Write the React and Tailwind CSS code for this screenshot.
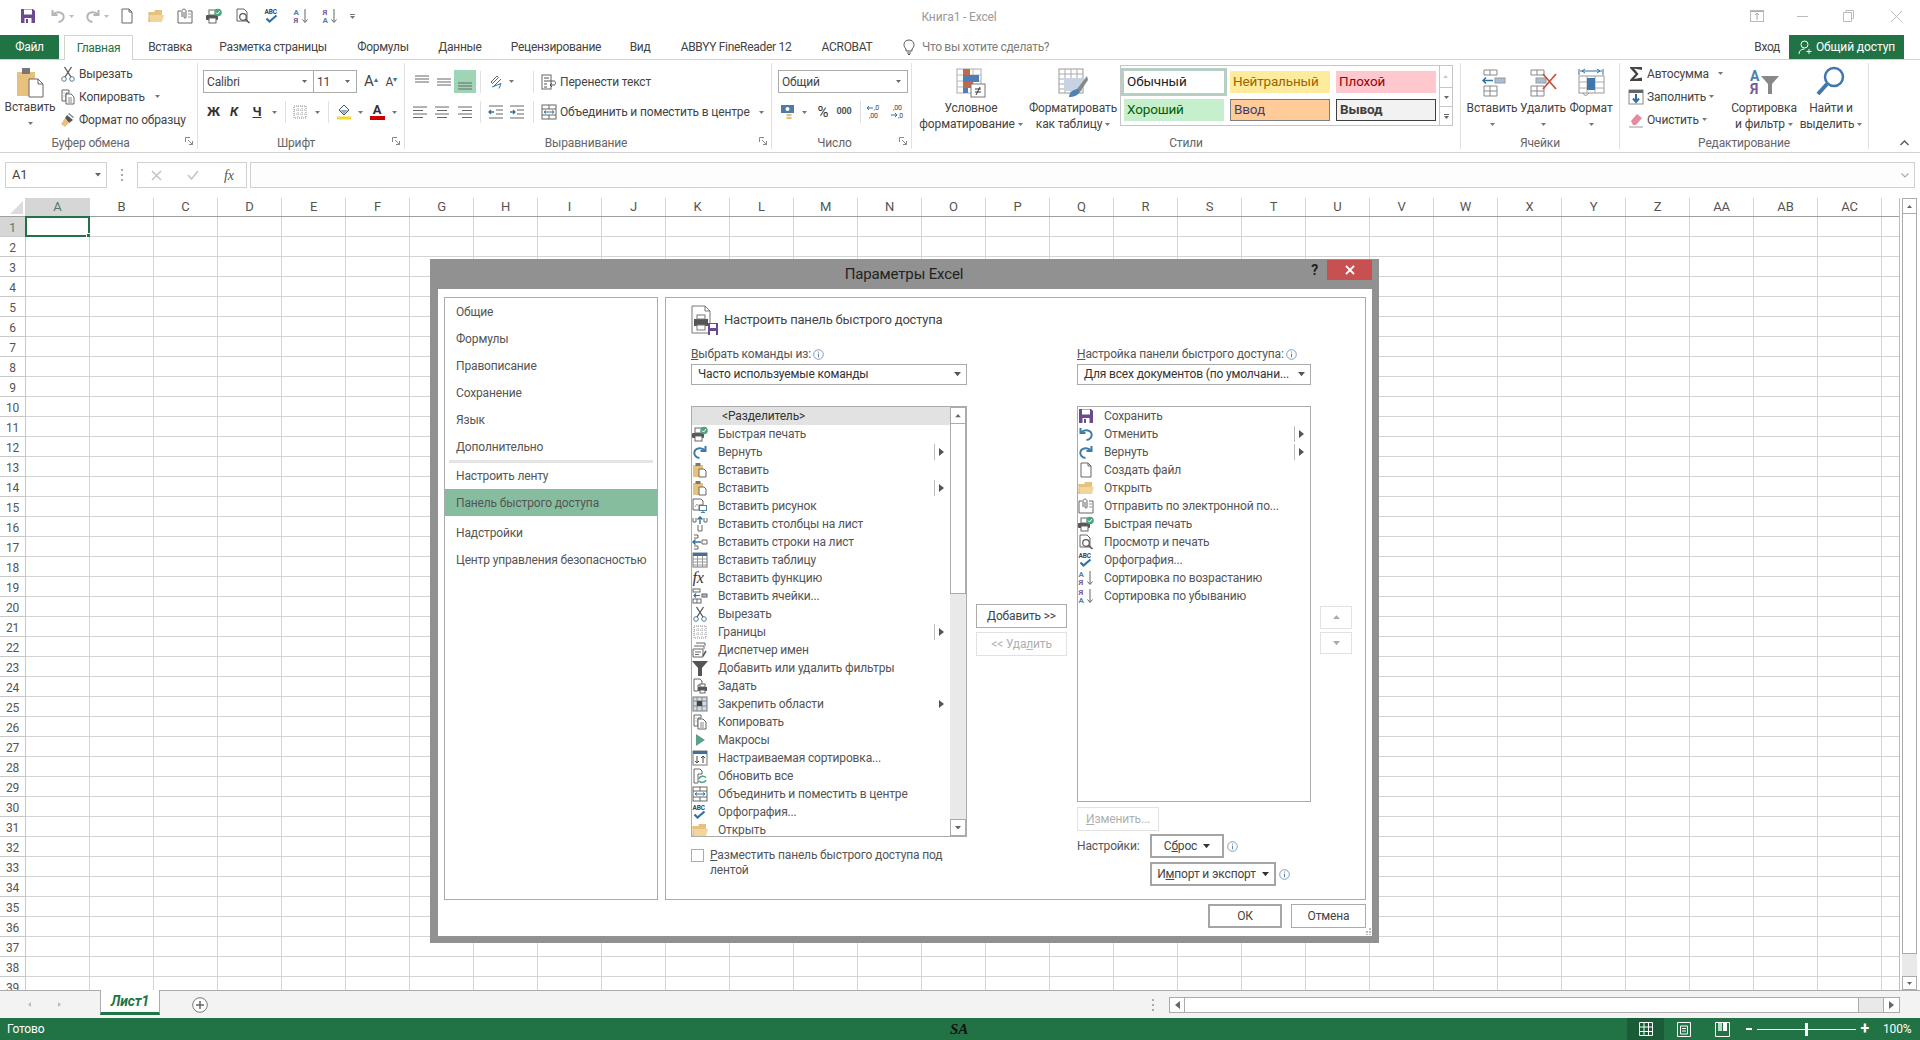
import React from 'react';

const Caret = ({ c = '#777', w = 5 }) => (
  <svg width={w} height={w * 0.6} viewBox="0 0 5 3" className="shrink-0"><path d="M0 0h5L2.5 3z" fill={c} /></svg>
);

const Arrow = () => (
  <svg width="5" height="8" viewBox="0 0 5 8"><path d="M0 0l5 4-5 4z" fill="#555" /></svg>
);

const Info = () => (
  <svg width="11" height="11" viewBox="0 0 11 11" className="shrink-0">
    <circle cx="5.5" cy="5.5" r="4.8" fill="#fff" stroke="#7f9fbf" />
    <path d="M5.5 2.6v1M5.5 4.7v3.6" stroke="#5f85a8" />
  </svg>
);

const Txt = ({ x, y, s = 7, c = '#444', b, children }) => (
  <text x={x} y={y} fontSize={s} fill={c} fontWeight={b ? 700 : 400} fontFamily="Roboto, sans-serif">{children}</text>
);

const lines = (rows) => rows.map(([a, b, y], i) => <path key={i} d={`M${a} ${y}H${b}`} stroke="#666" />);

const ICONS = {
  save: <><path d="M1 1h12l2 2v12H1z" fill="#6b4a90" /><rect x="4" y="1.5" width="8" height="5" fill="#fff" /><rect x="4.5" y="10" width="7" height="5" fill="#fff" /><rect x="6" y="11" width="2" height="4" fill="#6b4a90" /></>,
  undo: <><path d="M2.5 2v5h5" fill="none" stroke="currentColor" strokeWidth="2" /><path d="M3 6.5C6 3 12 3.5 13.5 7.5 14.5 11 12 13.5 8.5 14" fill="none" stroke="currentColor" strokeWidth="2" /></>,
  redo: <><path d="M13.5 2v5h-5" fill="none" stroke="currentColor" strokeWidth="2" /><path d="M13 6.5C10 3 4 3.5 2.5 7.5 1.5 11 4 13.5 7.5 14" fill="none" stroke="currentColor" strokeWidth="2" /></>,
  file: <><path d="M3 1h7l3 3v11H3z" fill="#fff" stroke="#666" /><path d="M10 1v3h3" fill="none" stroke="#666" /></>,
  open: <><path d="M1 4h5l1-2h7v5H1z" fill="#e6c27e" /><path d="M0 14l2-7h14l-2 7z" fill="#f1d59a" /><path d="M1 4v10" stroke="#d9b26a" /></>,
  mail: <><path d="M1 3h3M11 3h4v12H1V3" fill="none" stroke="#666" /><path d="M5 9V3c0-2.5 4-2.5 4 0v6c0 1.5-2 1.5-2 0V4" fill="none" stroke="#666" /><path d="M11 6h3M11 9h3" stroke="#999" /></>,
  qprint: <><rect x="0" y="7" width="12" height="5" rx="1" fill="#555" /><rect x="3" y="2" width="7" height="5" fill="#fff" stroke="#666" /><rect x="3" y="10" width="7" height="5" fill="#fff" stroke="#666" /><circle cx="12" cy="4.5" r="3.8" fill="#4aa67e" /><path d="M10 4.5l1.5 1.5 2.5-3" fill="none" stroke="#fff" /></>,
  preview: <><path d="M2 1h7l3 3v9H2z" fill="#fff" stroke="#666" /><circle cx="8" cy="9" r="3.3" fill="#fff" stroke="#555" strokeWidth="1.2" /><path d="M10.5 11.5L14.5 15" stroke="#555" strokeWidth="1.6" /></>,
  spell: <><Txt x="0.5" y="6" s={6.5} c="#444" b>ABC</Txt><path d="M2.5 10.5l3 3 7-6" fill="none" stroke="#33719f" strokeWidth="2.2" /></>,
  asc: <><Txt x="0.5" y="7" s={8} c="#4d82ad" b>А</Txt><Txt x="0.5" y="15" s={8} c="#7a5a9e" b>Я</Txt><path d="M12 1v13M9.5 11.5L12 14.5l2.5-3" fill="none" stroke="#666" /></>,
  desc: <><Txt x="0.5" y="7" s={8} c="#7a5a9e" b>Я</Txt><Txt x="0.5" y="15" s={8} c="#4d82ad" b>А</Txt><path d="M12 1v13M9.5 11.5L12 14.5l2.5-3" fill="none" stroke="#666" /></>,
  paste: <><rect x="1" y="3" width="10" height="12" fill="#e6c27e" /><rect x="3.5" y="1" width="5" height="3" fill="#777" /><path d="M7 7h5l2 2v6H7z" fill="#fff" stroke="#666" /></>,
  cut: <><circle cx="4" cy="13" r="2.3" fill="none" stroke="#4d7da6" /><circle cx="12" cy="13" r="2.3" fill="none" stroke="#4d7da6" /><path d="M5 11L11.5 1M11 11L4.5 1" stroke="#555" strokeWidth="1.3" /></>,
  copy: <><path d="M2 1h7v3H6v8H2z" fill="#fff" stroke="#666" /><path d="M6 5h5l3 3v7H6z" fill="#fff" stroke="#666" /><path d="M8 9h4M8 11h4M8 13h4M3.5 4h1M3.5 7h1" stroke="#888" /></>,
  painter: <><path d="M7 3l6 5-4 3-4-5z" fill="#555" /><path d="M9 1l5 4-1 1-5-4z" fill="#888" /><path d="M5 6l4 5-4 4-4-3z" fill="#e6c27e" /></>,
  picture: <><path d="M1 1h8l2 2v4H7v5H1z" fill="#fff" stroke="#666" /><path d="M3 9l2-3 1.5 2" fill="none" stroke="#8faabf" /><rect x="7.5" y="7.5" width="7" height="5" fill="#fff" stroke="#4d82ad" /><path d="M9 14.5h4M11 12.5v2" stroke="#4d82ad" /></>,
  insCol: <><path d="M1 2v4h3V2M12 2v4h3V2" fill="none" stroke="#666" /><path d="M6 9v6h4V9" fill="none" stroke="#666" /><path d="M8 8V1M5.5 3.5L8 1l2.5 2.5" fill="none" stroke="#33719f" strokeWidth="1.4" /></>,
  insRow: <><path d="M2 1h4v3H2M2 12h4v3H2" fill="none" stroke="#666" /><path d="M10 6h5v4h-5z" fill="#fff" stroke="#666" /><path d="M9 8H1M3.5 5.5L1 8l2.5 2.5" fill="none" stroke="#33719f" strokeWidth="1.4" /></>,
  table: <><rect x="1" y="1" width="14" height="14" fill="#fff" stroke="#777" /><rect x="1" y="1" width="14" height="3" fill="#3f6f9f" /><path d="M1 7h14M1 10h14M1 13h14M5.5 4v11M10.5 4v11" stroke="#999" /></>,
  fx: <text x="0.5" y="13" fontSize="16" fill="#333" fontStyle="italic" fontFamily="Liberation Serif, serif">fx</text>,
  insCell: <><rect x="1" y="1" width="7" height="3" fill="#fff" stroke="#666" /><rect x="1" y="11" width="8" height="4" fill="#fff" stroke="#666" /><path d="M5 11v4" stroke="#666" /><rect x="10" y="6" width="5" height="3" fill="#a7bfd6" stroke="#666" /><path d="M8 7.5H2M4 5.5l-2 2 2 2" fill="none" stroke="#33719f" strokeWidth="1.2" /></>,
  borders: <><rect x="2" y="2" width="12" height="12" fill="none" stroke="#888" strokeDasharray="1 1" /><path d="M2 6h12M2 10h12M6 2v12M10 2v12" stroke="#aaa" strokeDasharray="1 1" /></>,
  names: <><path d="M4 1h9v3M2 4h10v3M1 7h10v8H1z" fill="#fff" stroke="#666" /><path d="M3 10h6M3 12.5h4" stroke="#666" /><path d="M11 14l3-5" stroke="#555" strokeWidth="1.5" /></>,
  filter: <path d="M0 1h16l-6 7v8H6V8z" fill="#555" />,
  area: <><path d="M2 1h6l2 2v4H6v6H2z" fill="#fff" stroke="#666" /><rect x="6" y="9" width="9" height="4" fill="#555" /><rect x="8" y="6" width="5" height="3" fill="#fff" stroke="#666" /><rect x="8" y="12" width="5" height="3" fill="#fff" stroke="#666" /></>,
  freeze: <><rect x="1" y="1" width="14" height="14" fill="#cfdce8" stroke="#777" /><path d="M1 5h14M1 10h14M5 1v14M10 1v14" stroke="#888" /><rect x="5" y="5" width="5" height="5" fill="#444" /></>,
  macro: <path d="M4 2l9 6-9 6z" fill="#5fa08b" />,
  csort: <><rect x="1" y="1" width="14" height="14" fill="#fff" stroke="#777" /><rect x="1" y="1" width="14" height="3" fill="#3f6f9f" /><path d="M5 6v7M3 11l2 2 2-2M11 13V6M9 8l2-2 2 2" fill="none" stroke="#444" /></>,
  refresh: <><path d="M2 1h6l2 2v3H6v9H2z" fill="#fff" stroke="#666" /><path d="M7 11a4 3.5 0 0 1 7-1.5M14 12a4 3.5 0 0 1-7 1" fill="none" stroke="#4aa67e" strokeWidth="1.5" /></>,
  merge: <><rect x="1" y="1" width="14" height="14" fill="#fff" stroke="#666" /><path d="M1 5h14M1 11h14M8 1v4M8 11v4" stroke="#666" /><path d="M3 8h10M3 8l2-1.5M3 8l2 1.5M13 8l-2-1.5M13 8l-2 1.5" stroke="#33719f" fill="none" /></>,
  wrap: <><rect x="1" y="1" width="9" height="14" fill="#fff" stroke="#666" /><path d="M3 4h5M3 7h10c2 0 2 4 0 4H9M3 10h3M3 13h3M11 9l-2 2 2 2" fill="none" stroke="#555" /></>,
  orient: <><path d="M3 8l6-6 1.5 1.5-6 6z" fill="none" stroke="#666" /><path d="M6 12l7-7" stroke="#666" /><path d="M4 13l9-3.5-2 5" fill="none" stroke="#33719f" /></>,
  money: <><rect x="1" y="1" width="13" height="8" fill="#4d7da6" /><circle cx="7.5" cy="5" r="2" fill="#fff" /><ellipse cx="9" cy="11" rx="3" ry="1.3" fill="#e6c27e" /><ellipse cx="9" cy="14" rx="3" ry="1.3" fill="#e6c27e" /></>,
  incDec: <><Txt x="8" y="6" s={7}>,0</Txt><Txt x="3" y="14" s={7}>,00</Txt><path d="M7 4H1M3 2L1 4l2 2" fill="none" stroke="#33719f" /></>,
  decDec: <><Txt x="3" y="6" s={7}>,00</Txt><Txt x="8" y="14" s={7}>,0</Txt><path d="M1 11h6M5 9l2 2-2 2" fill="none" stroke="#33719f" /></>,
  fill: <><path d="M8 1l5 5-5 5-5-5z" fill="#fff" stroke="#555" /><path d="M4 6h8l-4 4z" fill="#8faabf" /><rect x="1" y="12.5" width="14" height="3" fill="#f2dc2f" /></>,
  sum: <path d="M2 1h12v3L6 2.5 10.5 8 6 13l8-1.5V15H2v-1l5.5-6L2 2z" fill="#444" />,
  fillDown: <><rect x="1" y="1" width="14" height="14" fill="#fff" stroke="#888" /><rect x="1" y="1" width="14" height="3" fill="#666" /><path d="M8 5v8M5 9.5L8 13l3-3.5" fill="none" stroke="#2f6f9f" strokeWidth="2" /></>,
  eraser: <><path d="M3 9l6-7 5 4-6 7H5z" fill="#e58aa0" /><path d="M1 15h14" stroke="#999" /></>,
};

const Ic = ({ n, s = 16, c = '' }) => (
  <svg width={s} height={s} viewBox="0 0 16 16" className={`shrink-0 ${c}`}>{ICONS[n]}</svg>
);

const Box = ({ children, w }) => <div className="flex items-center justify-center shrink-0 h-full whitespace-nowrap" style={{ width: w }}>{children}</div>;

const Sep = () => <div className="w-px h-[22px] bg-[#e1e1e1] shrink-0" />;

const AlignLines = ({ v = 'm', h = 'c' }) => {
  if (h === 'j') {
    const y = v === 't' ? [2, 5, 8] : v === 'm' ? [5, 8, 11] : [9, 12, 15];
    return <svg width="16" height="16" viewBox="0 0 16 16">{lines(y.map((p) => [1, 15, p]))}</svg>;
  }
  const a = { l: [[1, 15], [1, 11], [1, 15], [1, 11]], c: [[1, 15], [3, 13], [1, 15], [3, 13]], r: [[1, 15], [5, 15], [1, 15], [5, 15]] }[h];
  return <svg width="16" height="16" viewBox="0 0 16 16">{lines(a.map((p, i) => [p[0], p[1], 3 + i * 3.5]))}</svg>;
};

const Indent = ({ dir }) => (
  <svg width="16" height="16" viewBox="0 0 16 16">
    {lines([[1, 15, 2], [8, 15, 6], [8, 15, 10], [1, 15, 14]])}
    <path d={dir === 'in' ? 'M1 8h5M4 6l2 2-2 2' : 'M6 8H1M3 6L1 8l2 2'} fill="none" stroke="#33719f" strokeWidth="1.3" />
  </svg>
);

function TitleBar() {
  const step = ['open', 'mail', 'qprint', 'preview', 'spell', 'asc', 'desc'];
  return (
    <div className="relative h-[35px] flex items-center pl-[20px] pb-[3px] shrink-0">
      <Ic n="save" />
      <Ic n="undo" c="ml-[14px] text-[#b5b5b5]" />
      <div className="ml-[3px]"><Caret c="#bbb" /></div>
      <Ic n="redo" c="ml-[11px] text-[#b5b5b5]" />
      <div className="ml-[3px]"><Caret c="#bbb" /></div>
      <Ic n="file" c="ml-[10px]" />
      {step.map((n) => <Ic key={n} n={n} c="ml-[13px]" />)}
      <div className="ml-[12px] flex flex-col items-center gap-[1px]">
        <div className="w-[5px] h-px bg-[#777]" />
        <Caret />
      </div>
      <div className="flex-1 flex justify-center pr-[367px] pt-[2px] text-[#9a9a9a]">
        <span className="mr-[-10px]">Книга1 - Excel</span>
      </div>
      <div className="absolute right-0 top-0 h-[32px] flex items-center">
        <svg width="14" height="12" viewBox="0 0 14 12" className="mr-[33px]"><rect x="0.5" y="0.5" width="13" height="11" fill="none" stroke="#bbb" /><path d="M7 10V3M5 5l2-2 2 2M1 1.5h12" fill="none" stroke="#aaa" /></svg>
        <div className="w-[11px] h-px bg-[#bbb] mr-[35px]" />
        <svg width="11" height="12" viewBox="0 0 11 12" className="mr-[36px]"><path d="M3 2.5V.5h7.5v8H8.5M.5 2.5h8v9h-8z" fill="none" stroke="#bbb" /></svg>
        <svg width="13" height="13" viewBox="0 0 13 13" className="mr-[17px]"><path d="M1 1l11 11M12 1L1 12" stroke="#bbb" /></svg>
      </div>
    </div>
  );
}

const TABS = [['Вставка', 74], ['Разметка страницы', 132], ['Формулы', 88], ['Данные', 66], ['Рецензирование', 126], ['Вид', 42], ['ABBYY FineReader 12', 150], ['ACROBAT', 72]];

function TabRow() {
  return (
    <div className="h-[25px] flex items-stretch border-b border-[#d2d2d2] shrink-0 text-[#444] tracking-[-0.3px]">
      <div className="w-[59px] h-[24px] bg-[#217346] text-white flex items-center justify-center">Файл</div>
      <div className="ml-[5px] w-[69px] h-[25px] bg-white border border-b-0 border-[#d2d2d2] text-[#217346] flex items-center justify-center">Главная</div>
      {TABS.map(([t, w]) => <Box key={t} w={w}>{t}</Box>)}
      <svg width="12" height="16" viewBox="0 0 12 16" className="ml-[20px] self-center"><path d="M3 10C1 8 1 6 1 5.5 1 3 3 1 6 1s5 2 5 4.5c0 .5 0 2.500-2 4.500v2H3zM4 14h4M5 15.5h2" fill="none" stroke="#555" /></svg>
      <div className="ml-[7px] text-[#7d7d7d] flex items-center">Что вы хотите сделать?</div>
      <div className="flex-1" />
      <div className="flex items-center mr-[9px]">Вход</div>
      <div className="w-[115px] h-[24px] mr-[16px] bg-[#217346] text-white flex items-center justify-center gap-[3px] tracking-[-0.1px]">
        <svg width="15" height="15" viewBox="0 0 15 15"><circle cx="6.5" cy="4.5" r="3.5" fill="none" stroke="#fff" /><path d="M1 14c0-3 2-5 5.5-5M11 9v5M8.5 11.5h5" fill="none" stroke="#fff" /></svg>
        Общий доступ
      </div>
    </div>
  );
}

const Launcher = () => (
  <svg width="9" height="9" viewBox="0 0 9 9" className="absolute right-[3px] bottom-[3px]"><path d="M.5 5V.5H5M3 3l4.5 4.5M7.5 4v3.5H4" fill="none" stroke="#888" /></svg>
);

function Group({ w, label, launcher, pr = 0, children }) {
  return (
    <div className="relative my-[3px] flex flex-col border-r border-[#e1e1e1] shrink-0" style={{ width: w }}>
      <div className="h-[73px] flex">{children}</div>
      <div className="h-[14px] pt-[1px] flex items-center justify-center text-[#666] leading-none" style={{ paddingRight: pr }}>{label}</div>
      {launcher && <Launcher />}
    </div>
  );
}

function Large({ w, icon, text, second }) {
  return (
    <div className="flex flex-col items-center shrink-0" style={{ width: w }}>
      <div className="h-[36px] flex items-center justify-center">{icon}</div>
      <div className="h-[16px] mt-px flex items-center whitespace-nowrap">{text}</div>
      <div className="h-[16px] flex items-center gap-[3px] whitespace-nowrap">{second}<Caret /></div>
    </div>
  );
}

const SmallRow = ({ icon, text, caret, gap = 6 }) => (
  <div className="h-[23px] flex items-center whitespace-nowrap">
    <div className="w-[19px] flex justify-start">{icon}</div>
    <span>{text}</span>
    {caret && <div style={{ marginLeft: gap }}><Caret /></div>}
  </div>
);

const Combo = ({ w, text, className = '' }) => (
  <div className={`h-[23px] border border-[#ababab] flex items-center justify-between pl-[3px] pr-[6px] bg-white ${className}`} style={{ width: w }}>
    <span>{text}</span><Caret c="#666" />
  </div>
);

const Row1 = ({ children }) => <div className="h-[23px] mt-[7px] flex items-center">{children}</div>;
const Row2 = ({ children }) => <div className="h-[24px] mt-[7px] flex items-center">{children}</div>;

function StyleCell({ text, cls, selected }) {
  return (
    <div className="h-[22px] w-[100px] ml-[3px] relative">
      <div className={`h-full flex items-center pl-[3px] pb-px text-[13.5px] ${cls} ${selected ? 'outline-[3px] outline-[#b5d0c2]' : ''}`}>{text}</div>
    </div>
  );
}

function Ribbon() {
  return (
    <div className="h-[93px] flex border-b border-[#d2d2d2] shrink-0 text-[#444]">
      <Group w={198} label="Буфер обмена" launcher pr={16}>
        <div className="w-[60px] flex flex-col items-center">
          <svg width="30" height="31" viewBox="0 0 30 31" className="mt-[4px]">
            <rect x="2" y="5" width="18" height="24" fill="#e6c27e" />
            <rect x="7" y="1" width="8" height="6" fill="#777" />
            <path d="M14 12h9l5 5v13H14z" fill="#fff" stroke="#666" />
            <path d="M23 12v5h5" fill="none" stroke="#666" />
          </svg>
          <div className="mt-[1px] h-[16px] flex items-center">Вставить</div>
          <div className="h-[16px] flex items-center"><Caret /></div>
        </div>
        <div className="-mt-px">
          <SmallRow icon={<Ic n="cut" />} text="Вырезать" />
          <SmallRow icon={<Ic n="copy" />} text="Копировать" caret gap={10} />
          <SmallRow icon={<Ic n="painter" />} text="Формат по образцу" />
        </div>
      </Group>

      <Group w={207} label="Шрифт" launcher pr={10}>
        <div className="flex flex-col">
          <Row1>
            <div className="ml-[5px] flex">
              <Combo w={111} text="Calibri" />
              <Combo w={44} text="11" className="-ml-px" />
            </div>
            <span className="ml-[7px] text-[15px]">A<sup className="text-[8px] text-[#33719f]">▴</sup></span>
            <span className="ml-[8px] text-[12px]">A<sup className="text-[8px] text-[#33719f]">▾</sup></span>
          </Row1>
          <Row2>
            <div className="w-[6px]" />
            <Box w={19}><b className="text-[#333] text-[13px]">Ж</b></Box>
            <Box w={22}><b className="italic text-[#333] text-[13px]">К</b></Box>
            <Box w={24}><b className="underline text-[#333] text-[13px]">Ч</b></Box>
            <Box w={10}><Caret /></Box>
            <Box w={12}><Sep /></Box>
            <Box w={18}><Ic n="borders" /></Box>
            <Box w={17}><Caret /></Box>
            <Box w={4}><Sep /></Box>
            <Box w={28}><Ic n="fill" /></Box>
            <Box w={5}><Caret /></Box>
            <Box w={28}>
              <div className="flex flex-col items-center">
                <span className="text-[13px] font-bold leading-[11px] text-[#333]">A</span>
                <div className="w-[15px] h-[4px] bg-[#c00] mt-[1px]" />
              </div>
            </Box>
            <Box w={6}><Caret /></Box>
          </Row2>
        </div>
      </Group>

      <Group w={367} label="Выравнивание" launcher pr={4}>
        <div className="flex flex-col pl-[5px]">
          <Row1>
            <Box w={24}><AlignLines v="t" h="j" /></Box>
            <Box w={20}><AlignLines v="m" h="j" /></Box>
            <Box w={22}><div className="w-full h-full bg-[#9fd5b7] flex items-center justify-center"><AlignLines v="b" h="j" /></div></Box>
            <Box w={8}><Sep /></Box>
            <Box w={24}><Ic n="orient" /></Box>
            <Box w={6}><Caret /></Box>
            <div className="w-[19px]" /><Sep /><div className="w-[7px]" />
            <Ic n="wrap" />
            <span className="ml-[3px] whitespace-nowrap">Перенести текст</span>
          </Row1>
          <Row2>
            <Box w={20}><AlignLines h="l" /></Box>
            <Box w={24}><AlignLines h="c" /></Box>
            <Box w={22}><AlignLines h="r" /></Box>
            <Box w={8}><Sep /></Box>
            <Box w={24}><Indent dir="out" /></Box>
            <Box w={18}><Indent dir="in" /></Box>
            <div className="w-[7px]" /><Sep /><div className="w-[7px]" />
            <Ic n="merge" />
            <span className="ml-[3px] whitespace-nowrap">Объединить и поместить в центре</span>
            <div className="ml-[9px]"><Caret /></div>
          </Row2>
        </div>
      </Group>

      <Group w={140} label="Число" launcher pr={14}>
        <div className="flex flex-col pl-[6px]">
          <Row1><Combo w={130} text="Общий" /></Row1>
          <Row2>
            <Box w={20}><Ic n="money" /></Box>
            <Box w={12}><Caret /></Box>
            <Box w={26}><span className="text-[15px] text-[#333]">%</span></Box>
            <Box w={16}><span className="text-[9px] font-bold text-[#555]">000</span></Box>
            <div className="w-[8px]" /><Sep /><div className="w-px" />
            <Box w={24}><Ic n="incDec" /></Box>
            <Box w={24}><Ic n="decDec" /></Box>
          </Row2>
        </div>
      </Group>

      <Group w={549} label="Стили">
        <Large w={118} text="Условное" second="форматирование" icon={
          <svg width="30" height="30" viewBox="0 0 30 30" className="mt-[4px]">
            <rect x="1" y="1" width="24" height="24" fill="#fff" stroke="#aaa" />
            <path d="M1 7h24M1 13h24M1 19h24M9 1v24M17 1v24" stroke="#bbb" />
            <rect x="7" y="1" width="7" height="6" fill="#bf6a4a" /><rect x="7" y="7" width="16" height="7" fill="#4f7fb5" /><rect x="7" y="14" width="10" height="6" fill="#bf6a4a" /><rect x="7" y="20" width="5" height="5" fill="#4f7fb5" />
            <rect x="15" y="16" width="14" height="13" fill="#fff" stroke="#777" />
            <path d="M19 21h6M19 24h6M24 19l-4 8" stroke="#333" fill="none" />
          </svg>
        } />
        <Large w={86} text="Форматировать" second="как таблицу" icon={
          <svg width="30" height="30" viewBox="0 0 30 30" className="mt-[4px]">
            <rect x="1" y="1" width="24" height="24" fill="#fff" stroke="#999" />
            <path d="M1 6h24M1 11h24M1 16h24M1 21h24M7 1v24M13 1v24M19 1v24" stroke="#aaa" />
            <path d="M6 10h19v13H6z" fill="#c6d3e2" />
            <path d="M29 8L19 21l3 3L30 12z" fill="#888" />
            <path d="M11 29c0-4 4-8 9-8l2 3c-2 3-6 5-11 5z" fill="#4f7fb5" />
          </svg>
        } />
        <div className="ml-[4px] mt-[2px] w-[333px] h-[61px] border border-[#c6c6c6] flex">
          <div className="w-[318px] h-full pt-[5px] grid grid-cols-[106px_106px_106px] gap-y-[6px] auto-rows-[22px]">
            <StyleCell text="Обычный" cls="bg-white text-[#222]" selected />
            <StyleCell text="Нейтральный" cls="bg-[#ffeb9c] text-[#9c6500]" />
            <StyleCell text="Плохой" cls="bg-[#ffc7ce] text-[#9c0006]" />
            <StyleCell text="Хороший" cls="bg-[#c6efce] text-[#006100]" />
            <StyleCell text="Ввод" cls="bg-[#ffcc99] text-[#3f3f76] border border-[#7f7f7f]" />
            <StyleCell text="Вывод" cls="bg-[#f2f2f2] text-[#3f3f3f] font-bold border border-[#3f3f3f]" />
          </div>
          <div className="ml-auto w-[14px] border-l border-[#c6c6c6] flex flex-col">
            <div className="h-[21px] flex items-center justify-center rotate-180"><Caret c="#ccc" /></div>
            <div className="h-[20px] border-y border-[#c6c6c6] flex items-center justify-center"><Caret c="#666" /></div>
            <div className="h-[18px] flex flex-col items-center justify-center gap-px"><div className="w-[5px] h-px bg-[#666]" /><Caret c="#666" /></div>
          </div>
        </div>
      </Group>

      <Group w={159} label="Ячейки">
        <Large w={62} text="Вставить" second="" icon={
          <svg width="28" height="28" viewBox="0 0 28 28" className="mt-[4px]">
            <path d="M6 1h13v5H6zM12 1v5M6 17h13v10H6zM6 22h13M12 17v10" fill="#fff" stroke="#888" />
            <rect x="17" y="9" width="10" height="5" fill="#a7bfd6" stroke="#999" />
            <path d="M15 11.5H5M8 8.5l-3 3 3 3" fill="none" stroke="#33719f" strokeWidth="1.5" />
          </svg>
        } />
        <Large w={40} text="Удалить" second="" icon={
          <svg width="30" height="28" viewBox="0 0 30 28" className="mt-[4px]">
            <path d="M3 1h13v5H3zM9 1v5M3 17h13v10H3zM3 22h13M9 17v10" fill="#fff" stroke="#888" />
            <rect x="8" y="9" width="10" height="5" fill="#a7bfd6" stroke="#999" />
            <path d="M15 5l13 15M28 5L15 20" stroke="#c4543f" strokeWidth="1.8" />
          </svg>
        } />
        <Large w={56} text="Формат" second="" icon={
          <svg width="30" height="30" viewBox="0 0 30 30" className="mt-[4px]">
            <path d="M3 1v6M27 1v6M4 3h22M6 3l3-2M6 3l3 2M24 3l-3-2M24 3l-3 2" fill="none" stroke="#33719f" />
            <rect x="3" y="8" width="25" height="17" fill="#fff" stroke="#999" />
            <path d="M3 14h25M3 20h25M11 8v17M19 8v17" stroke="#aaa" />
            <rect x="11" y="10" width="8" height="12" fill="#3f76ad" />
            <path d="M7 25c1 3 4 3 6 0" fill="none" stroke="#888" />
          </svg>
        } />
      </Group>

      <Group w={249} label="Редактирование">
        <div className="w-[109px] pl-[8px] -mt-px">
          <div className="h-[23px] flex items-center whitespace-nowrap"><Ic n="sum" /><span className="ml-[3px]">Автосумма</span><div className="ml-[9px]"><Caret /></div></div>
          <div className="h-[23px] flex items-center whitespace-nowrap"><Ic n="fillDown" /><span className="ml-[3px]">Заполнить</span><div className="ml-[3px]"><Caret /></div></div>
          <div className="h-[23px] flex items-center whitespace-nowrap"><Ic n="eraser" /><span className="ml-[3px]">Очистить</span><div className="ml-[3px]"><Caret /></div></div>
        </div>
        <Large w={70} text="Сортировка" second="и фильтр" icon={
          <svg width="32" height="30" viewBox="0 0 32 30" className="mt-[2px]">
            <text x="2" y="14" fontSize="14" fontWeight="700" fill="#4d82ad" fontFamily="Roboto, sans-serif">А</text>
            <text x="2" y="27" fontSize="14" fontWeight="700" fill="#7a5a9e" fontFamily="Roboto, sans-serif">Я</text>
            <path d="M13 9h18l-7 8v10h-4V17z" fill="#888" />
          </svg>
        } />
        <Large w={64} text="Найти и" second="выделить" icon={
          <svg width="30" height="32" viewBox="0 0 30 32" className="mt-[2px]">
            <circle cx="18" cy="11" r="9" fill="#fff" stroke="#3f76ad" strokeWidth="2.5" />
            <path d="M11 18L2 28" stroke="#3f76ad" strokeWidth="4" />
          </svg>
        } />
      </Group>

      <div className="flex-1 flex justify-end items-end pb-[6px] pr-[11px]">
        <svg width="9" height="6" viewBox="0 0 9 6"><path d="M.5 5l4-4 4 4" fill="none" stroke="#555" strokeWidth="1.3" /></svg>
      </div>
    </div>
  );
}

function FormulaBar() {
  return (
    <div className="mt-[9px] h-[26px] flex shrink-0 pl-[5px] text-[#444]">
      <div className="w-[102px] border border-[#d0d0d0] flex items-center justify-between pl-[6px] pr-[5px] text-[13px]">A1<Caret c="#666" w={6} /></div>
      <div className="w-[30px] flex flex-col items-center justify-center gap-[3px]">
        <div className="w-[2px] h-[2px] bg-[#aaa]" /><div className="w-[2px] h-[2px] bg-[#aaa]" /><div className="w-[2px] h-[2px] bg-[#aaa]" />
      </div>
      <div className="w-[110px] border border-[#d0d0d0] flex items-center">
        <Box w={36}><svg width="11" height="11" viewBox="0 0 11 11"><path d="M1 1l9 9M10 1l-9 9" stroke="#c4c4c4" strokeWidth="1.5" /></svg></Box>
        <Box w={38}><svg width="12" height="10" viewBox="0 0 12 10"><path d="M1 5l3.5 4L11 1" fill="none" stroke="#c4c4c4" strokeWidth="1.5" /></svg></Box>
        <Box w={34}><span className="italic font-['Liberation_Serif',serif] text-[14px] text-[#555]">fx</span></Box>
      </div>
      <div className="ml-[3px] w-[1665px] border border-[#d0d0d0] flex items-center justify-end pr-[5px] bg-[#fdfdfd]">
        <svg width="8" height="5" viewBox="0 0 8 5"><path d="M.5.5l3.5 3.5L7.5.5" fill="none" stroke="#aaa" strokeWidth="1.2" /></svg>
      </div>
    </div>
  );
}

const letters = 'ABCDEFGHIJKLMNOPQRSTUVWXYZ'.split('').concat(['AA', 'AB', 'AC']);
const rowNums = Array.from({ length: 39 }, (_, i) => i + 1);

function Sheet() {
  return (
    <div className="mt-[10px] h-[792px] flex shrink-0 overflow-hidden text-[#555]">
      <div className="w-[1900px] border-r border-[#bdbdbd] overflow-hidden">
        <div className="h-[19px] flex border-b border-[#9e9e9e] text-[13px]">
          <div className="w-[26px] flex items-end justify-end pr-[2px] pb-[2px] border-r border-[#d4d4d4] shrink-0">
            <svg width="13" height="13" viewBox="0 0 13 13"><path d="M13 0v13H0z" fill="#dcdcdc" /></svg>
          </div>
          {letters.map((l) => (
            <div key={l} className={`w-[64px] flex items-center justify-center border-r border-[#d4d4d4] shrink-0 ${l === 'A' ? 'bg-[#d6d6d6] text-[#4f7a63]' : ''}`}>{l}</div>
          ))}
        </div>
        {rowNums.map((r) => (
          <div key={r} className="h-[20px] flex shrink-0">
            <div className={`w-[26px] shrink-0 pt-[2px] flex items-center justify-center border-r border-b border-[#c8c8c8] ${r === 1 ? 'bg-[#d6d6d6] text-[#4f7a63]' : ''}`}>{r}</div>
            {letters.map((l) => (
              <div key={l} className="relative w-[64px] shrink-0 border-r border-b border-[#d4d4d4]">
                {r === 1 && l === 'A' && (
                  <div className="absolute -left-px -top-px w-[65px] h-[21px] border-2 border-[#217346]">
                    <div className="absolute -right-[3px] -bottom-[3px] w-[5px] h-[5px] bg-[#217346] border border-white" />
                  </div>
                )}
              </div>
            ))}
            <div className="flex-1 border-b border-[#d4d4d4]" />
          </div>
        ))}
      </div>
      <div className="ml-[2px] w-[15px] h-full flex flex-col bg-[#e9e9e9]">
        <div className="h-[16px] bg-white border border-[#ababab] flex items-center justify-center"><div className="rotate-180"><Caret c="#666" /></div></div>
        <div className="h-[740px] bg-white border-x border-b border-[#ababab]" />
        <div className="flex-1" />
        <div className="h-[14px] bg-white border border-[#ababab] flex items-center justify-center"><Caret c="#666" /></div>
      </div>
    </div>
  );
}

const Arrow2 = ({ left }) => (
  <svg width="5" height="8" viewBox="0 0 5 8" className={left ? 'rotate-180' : ''}><path d="M0 0l5 4-5 4z" fill="#666" /></svg>
);

function SheetBar() {
  return (
    <div className="h-[28px] flex bg-[#f3f3f3] border-t border-[#ababab] shrink-0">
      <div className="w-[100px] flex items-center pl-[27px] gap-[25px]">
        <div className="rotate-90"><Caret c="#bbb" /></div>
        <div className="-rotate-90"><Caret c="#bbb" /></div>
      </div>
      <div className="w-[60px] h-[25px] -mt-px bg-white border-x border-[#ababab] border-b-[3px] border-b-[#217346] flex items-center justify-center text-[#217346] text-[14px] font-bold italic">Лист1</div>
      <div className="ml-[32px] flex items-center">
        <svg width="16" height="16" viewBox="0 0 16 16"><circle cx="8" cy="8" r="7.3" fill="#fff" stroke="#777" /><path d="M4 8h8M8 4v8" stroke="#666" strokeWidth="1.5" /></svg>
      </div>
      <div className="ml-[937px] w-[16px] flex flex-col items-center justify-center gap-[3px]">
        <div className="w-[2px] h-[2px] bg-[#aaa]" /><div className="w-[2px] h-[2px] bg-[#aaa]" /><div className="w-[2px] h-[2px] bg-[#aaa]" />
      </div>
      <div className="ml-[8px] mt-[6px] w-[731px] h-[16px] flex border border-[#ababab]">
        <div className="w-[15px] border-r border-[#ababab] bg-white flex items-center justify-center"><Arrow2 left /></div>
        <div className="w-[674px] bg-white border-r border-[#ababab]" />
        <div className="w-[25px] bg-[#e9e9e9] border-r border-[#ababab]" />
        <div className="flex-1 bg-white flex items-center justify-center"><Arrow2 /></div>
      </div>
    </div>
  );
}

function StatusBar() {
  return (
    <div className="h-[22px] flex items-center bg-[#217346] text-white shrink-0">
      <span className="ml-[7px]">Готово</span>
      <span className="absolute left-[950px] font-['Liberation_Serif',serif] italic font-bold text-[15px] text-[#111]">SA</span>
      <div className="ml-auto w-[37px] h-full bg-[#1a5c38] flex items-center justify-center">
        <svg width="14" height="14" viewBox="0 0 14 14"><path d="M.5.5h13v13H.5zM.5 5h13M.5 9.5h13M5 .5v13M9.5.5v13" fill="none" stroke="#fff" /></svg>
      </div>
      <svg width="14" height="15" viewBox="0 0 14 15" className="ml-[13px]"><path d="M.5.5h13v14H.5z" fill="none" stroke="#fff" /><path d="M3.5 4h7v8h-7zM5 6.5h4M5 9h4" fill="none" stroke="#fff" /></svg>
      <svg width="15" height="15" viewBox="0 0 15 15" className="ml-[24px]"><path d="M.5.5h14v14H.5z" fill="none" stroke="#fff" /><rect x="3" y="1" width="4" height="8" fill="#b9d8c6" /><rect x="8" y="1" width="4" height="8" fill="#fff" /></svg>
      <div className="ml-[16px] w-[6px] h-[2px] bg-white" />
      <div className="ml-[5px] w-[99px] h-px bg-white relative">
        <div className="absolute left-[48px] -top-[6px] w-[3px] h-[13px] bg-white" />
      </div>
      <span className="ml-[4px] text-[16px] font-bold leading-none">+</span>
      <span className="ml-[14px] mr-[9px] w-[28px] text-right">100%</span>
    </div>
  );
}

const LEFT = [
  ['qprint', 'Быстрая печать'], ['redo', 'Вернуть', 'sep'], ['paste', 'Вставить'], ['paste', 'Вставить', 'sep'],
  ['picture', 'Вставить рисунок'], ['insCol', 'Вставить столбцы на лист'], ['insRow', 'Вставить строки на лист'],
  ['table', 'Вставить таблицу'], ['fx', 'Вставить функцию'], ['insCell', 'Вставить ячейки...'], ['cut', 'Вырезать'],
  ['borders', 'Границы', 'sep'], ['names', 'Диспетчер имен'], ['filter', 'Добавить или удалить фильтры'], ['area', 'Задать'],
  ['freeze', 'Закрепить области', 'arrow'], ['copy', 'Копировать'], ['macro', 'Макросы'], ['csort', 'Настраиваемая сортировка...'],
  ['refresh', 'Обновить все'], ['merge', 'Объединить и поместить в центре'], ['spell', 'Орфография...'], ['open', 'Открыть'],
];

const RIGHT = [
  ['save', 'Сохранить'], ['undo', 'Отменить', 'sep'], ['redo', 'Вернуть', 'sep'], ['file', 'Создать файл'], ['open', 'Открыть'],
  ['mail', 'Отправить по электронной по...'], ['qprint', 'Быстрая печать'], ['preview', 'Просмотр и печать'], ['spell', 'Орфография...'],
  ['asc', 'Сортировка по возрастанию'], ['desc', 'Сортировка по убыванию'],
];

function ListRow({ icon, text, sub }) {
  return (
    <div className="h-[18px] flex items-center shrink-0 whitespace-nowrap pb-px">
      <Ic n={icon} c="text-[#3f7ba8]" />
      <span className="ml-[10px]">{text}</span>
      {sub && (
        <div className="ml-auto mr-[6px] flex items-center h-full">
          {sub === 'sep' && <div className="w-px h-[16px] bg-[#bbb] mr-[4px]" />}
          <Arrow />
        </div>
      )}
    </div>
  );
}

const Btn = ({ w, children, disabled, strong }) => (
  <div
    className={`h-[24px] shrink-0 flex items-center justify-center whitespace-nowrap bg-white ${disabled ? 'border border-[#e2e2e2] text-[#b0b0b0]' : strong ? 'border-2 border-[#a5a5a5] text-[#444]' : 'border border-[#ababab] text-[#444]'}`}
    style={{ width: w }}
  >
    {children}
  </div>
);

const Select = ({ w, text, label, und }) => (
  <div style={{ width: w }}>
    <div className="h-[18px] pb-[2px] flex items-center text-[#555] gap-[2px] whitespace-nowrap"><span><u>{und}</u>{label}</span><Info /></div>
    <div className="h-[21px] pb-px border border-[#ababab] flex items-center justify-between pl-[6px] pr-[5px] text-[#333] whitespace-nowrap">
      <span>{text}</span><Caret c="#555" w={7} />
    </div>
  </div>
);

const NAV1 = ['Общие', 'Формулы', 'Правописание', 'Сохранение', 'Язык', 'Дополнительно'];

function Dialog() {
  return (
    <div className="absolute left-[430px] top-[259px] w-[949px] h-[684px] bg-[#919191] flex flex-col pl-[8px] pr-[7px] pb-[7px] text-[#555]">
      <div className="relative h-[30px] shrink-0 pt-px flex items-center justify-center text-[15px] text-[#222]">
        <span className="mr-[2px]">Параметры Excel</span>
        <div className="absolute right-0 top-[1px] h-[20px] flex items-center">
          <span className="mr-[9px] font-bold text-[14px] text-[#222]">?</span>
          <div className="w-[45px] h-[20px] bg-[#c75050] flex items-center justify-center">
            <svg width="10" height="10" viewBox="0 0 10 10"><path d="M1 1l8 8M9 1L1 9" stroke="#fff" strokeWidth="1.8" /></svg>
          </div>
        </div>
      </div>
      <div className="relative flex-1 bg-white flex flex-col pt-[8px] px-[6px]">
        <div className="h-[603px] flex gap-[7px] shrink-0">
          <div className="w-[214px] border border-[#ababab] whitespace-nowrap">
            {NAV1.map((t) => <div key={t} className="h-[27px] flex items-center pl-[11px]">{t}</div>)}
            <div className="h-[3px] mx-[4px] bg-[#e4e4e4]" />
            <div className="h-[26px] flex items-center pl-[11px]">Настроить ленту</div>
            <div className="h-[27px] flex items-center pl-[11px] bg-[#86bd9f]">Панель быстрого доступа</div>
            <div className="h-[3px]" />
            <div className="h-[27px] flex items-center pl-[11px]">Надстройки</div>
            <div className="h-[27px] flex items-center pl-[11px]">Центр управления безопасностью</div>
          </div>
          <div className="w-[701px] border border-[#ababab] pt-[7px] pl-[25px]">
            <div className="h-[30px] flex items-center">
              <svg width="28" height="30" viewBox="0 0 28 30" className="shrink-0">
                <path d="M1 1h13l5 5v22H1z" fill="#fff" stroke="#777" />
                <path d="M14 1v5h5" fill="none" stroke="#777" />
                <rect x="3" y="14" width="14" height="7" fill="#555" />
                <rect x="6" y="10" width="8" height="4" fill="#fff" stroke="#777" />
                <rect x="6" y="20" width="8" height="5" fill="#fff" stroke="#777" />
                <path d="M17 18h10v12H17z" fill="#6b4a90" />
                <rect x="19" y="19" width="6" height="4" fill="#fff" />
                <rect x="19" y="26" width="6" height="4" fill="#fff" />
              </svg>
              <span className="ml-[5px] text-[13px] tracking-[-0.2px] text-[#444]">Настроить панель быстрого доступа</span>
            </div>
            <div className="mt-[11px] flex">
              <div className="w-[276px] shrink-0">
                <Select w={276} und="В" label="ыбрать команды из:" text="Часто используемые команды" />
                <div className="mt-[21px] h-[431px] border border-[#ababab] flex overflow-hidden">
                  <div className="w-[258px] flex flex-col overflow-hidden">
                    <div className="h-[18px] shrink-0 bg-[#e2e2e2] pl-[30px] pb-px flex items-center text-[#333]">&lt;Разделитель&gt;</div>
                    {LEFT.map(([i, t, s], k) => <ListRow key={k} icon={i} text={t} sub={s} />)}
                  </div>
                  <div className="flex-1 flex flex-col bg-[#e9e9e9]">
                    <div className="h-[17px] bg-white border border-[#ababab] flex items-center justify-center"><div className="rotate-180"><Caret c="#666" w={6} /></div></div>
                    <div className="h-[170px] bg-white border-x border-b border-[#ababab]" />
                    <div className="flex-1" />
                    <div className="h-[17px] bg-white border border-[#ababab] flex items-center justify-center"><Caret c="#666" w={6} /></div>
                  </div>
                </div>
                <div className="mt-[12px] flex">
                  <div className="w-[13px] h-[13px] border border-[#ababab] shrink-0" />
                  <div className="ml-[6px] -mt-[1px] leading-[15px]"><u>Р</u>азместить панель быстрого доступа под<br />лентой</div>
                </div>
              </div>
              <div className="ml-[9px] w-[91px] shrink-0 pt-[258px]">
                <Btn w={91}><span><u>Д</u>обавить &gt;&gt;</span></Btn>
                <div className="h-[4px]" />
                <Btn w={91} disabled><span>&lt;&lt; Уда<u>л</u>ить</span></Btn>
              </div>
              <div className="ml-[10px] w-[234px] shrink-0">
                <Select w={234} und="Н" label="астройка панели быстрого доступа:" text="Для всех документов (по умолчани..." />
                <div className="mt-[21px] h-[396px] border border-[#ababab] flex flex-col">
                  {RIGHT.map(([i, t, s]) => <ListRow key={t} icon={i} text={t} sub={s} />)}
                </div>
                <div className="mt-[5px]"><Btn w={82} disabled><span><u>И</u>зменить...</span></Btn></div>
                <div className="mt-[3px] flex items-center">
                  <span className="w-[73px] shrink-0">Настройки:</span>
                  <Btn w={74} strong><span className="mr-[6px]">С<u>б</u>рос</span><Caret c="#333" w={7} /></Btn>
                  <div className="ml-[3px]"><Info /></div>
                </div>
                <div className="mt-[4px] ml-[73px] flex items-center">
                  <Btn w={126} strong><span className="mr-[6px]">И<u>м</u>порт и экспорт</span><Caret c="#333" w={7} /></Btn>
                  <div className="ml-[3px]"><Info /></div>
                </div>
              </div>
              <div className="ml-[9px] w-[32px] shrink-0 pt-[260px]">
                <div className="h-[23px] border border-[#e2e2e2] flex items-center justify-center"><div className="rotate-180"><Caret c="#aaa" w={7} /></div></div>
                <div className="h-[22px] mt-[3px] border border-[#e2e2e2] flex items-center justify-center"><Caret c="#aaa" w={7} /></div>
              </div>
            </div>
          </div>
        </div>
        <div className="mt-[4px] flex justify-end gap-[9px]">
          <Btn w={74} strong>ОК</Btn>
          <Btn w={75}>Отмена</Btn>
        </div>
        <svg width="7" height="7" viewBox="0 0 7 7" className="absolute right-[1px] bottom-[1px]"><path d="M5 0h2v2H5zM5 3h2v2H5zM2 3h2v2H2zM5 6h2v1H5zM2 6h2v1H2z" fill="#bbb" /></svg>
      </div>
    </div>
  );
}

export default function App() {
  return (
    <div className="relative w-[1920px] h-[1040px] overflow-hidden flex flex-col bg-white [font-family:Roboto,sans-serif] text-[12px] tracking-[-0.15px]">
      <TitleBar />
      <TabRow />
      <Ribbon />
      <FormulaBar />
      <Sheet />
      <SheetBar />
      <StatusBar />
      <Dialog />
    </div>
  );
}
